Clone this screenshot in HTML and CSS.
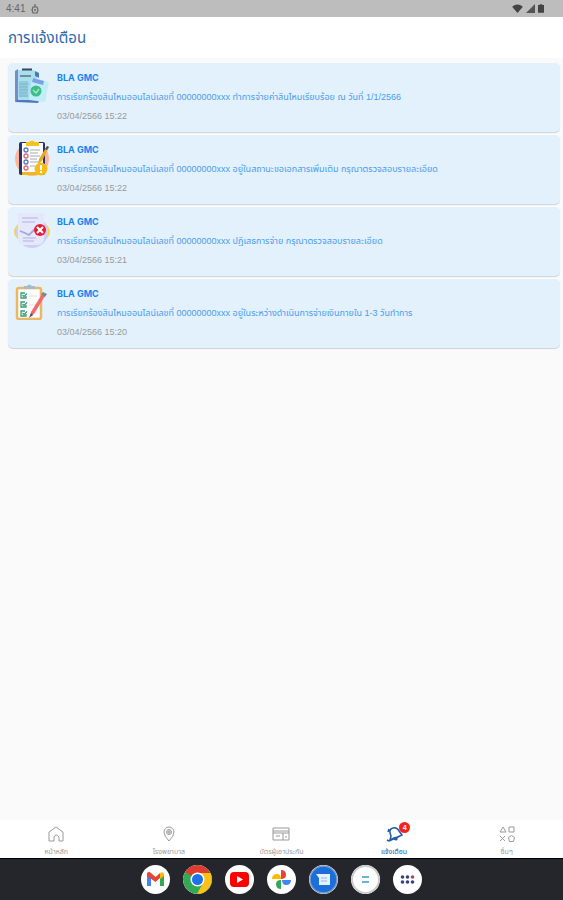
FILE: index.html
```html
<!DOCTYPE html>
<html lang="th">
<head>
    <meta charset="UTF-8">
    <meta name="viewport" content="width=device-width, initial-scale=1.0">
    <title>การแจ้งเตือน</title>
    <link rel="stylesheet" href="styles.css">
</head>
<body>
    <div class="status-bar">
        <span class="time">4:41</span>
        <svg width="8" height="10" viewBox="0 0 8 10"><path d="M4 0v3M2 3h4l1 3-1 3H2L1 6z" fill="none" stroke="#666" stroke-width="1.2"/><circle cx="4" cy="6" r="1" fill="#666"/></svg>
        <div class="status-icons">
            <svg width="11" height="9" viewBox="0 0 12 10"><path d="M0 3Q6-2 12 3L6 10z" fill="#444"/></svg>
            <svg width="9" height="9" viewBox="0 0 9 9"><path d="M9 0v9H0z" fill="#555"/></svg>
            <svg width="6" height="9" viewBox="0 0 7 10"><path d="M2 0h3v1h2v9H0V1h2z" fill="#444"/></svg>
        </div>
    </div>
    <header class="header">
        <h1>การแจ้งเตือน</h1>
    </header>

    <main class="list">
        <article class="card">
            <svg class="card-icon" viewBox="0 0 36 36">
                <path d="M1 3l3-2v31l-3 2z" fill="#6f8fd0"/>
                <path d="M1 34l3-3h22l-2 4z" fill="#5277bd"/>
                <path d="M4 2h16l3 5v25H4z" fill="#a9deea"/>
                <path d="M21 3l4 2v5l-4-2z" fill="#477bbd"/>
                <path d="M8 1.500h10" stroke="#344761" stroke-width="2"/>
                <path d="M6 8h11" stroke="#56758a" stroke-width="1.500"/>
                <path d="M5 13h9v16H5z" fill="#93cbdc"/>
                <path d="M5 16h10M5 19h9M5 22h9M5 25h8M5 28h9" stroke="#7fb7cd"/>
                <path d="M18 10l17 4-4 20-16-2z" fill="#c1edf7"/>
                <path d="M19 10l11 3-1 4-11-3z" fill="#7aa0e6"/>
                <circle cx="22" cy="23" r="5.500" fill="#3cbd8a"/>
                <path d="M19 22l3 3 3-4" fill="none" stroke="#a6ecd0" stroke-width="1.300"/>
            </svg>
            <div class="details">
                <h2>BLA GMC</h2>
                <p>การเรียกร้องสินไหมออนไลน์เลขที่ 00000000xxx ทำการจ่ายค่าสินไหมเรียบร้อย ณ วันที่ 1/1/2566</p>
                <time>03/04/2566 15:22</time>
            </div>
        </article>
        <article class="card">
            <svg class="card-icon" viewBox="0 0 36 36">
                <circle cx="18" cy="19" r="17" fill="#ffb59b"/>
                <rect x="5" y="2" width="26" height="33" rx="2" fill="#24356f"/>
                <path d="M8 32h20v3H8z" fill="#edb819"/>
                <path d="M8 3h21v29H8z" fill="#fff"/>
                <path d="M12 2h3q3-3 6 0h4v4H12z" fill="#f7c323"/>
                <g fill="none" stroke-width="1.300"><circle cx="12" cy="10" r="2" stroke="#5577bd"/><circle cx="12" cy="16" r="2" stroke="#e56475"/><circle cx="12" cy="22" r="2" stroke="#5577bd"/><circle cx="12" cy="28" r="2" stroke="#e56475"/></g>
                <path d="M16 10h10M16 13h8M16 16h10M16 19h7M16 22h9M16 26h5" stroke="#a6a7b5"/>
                <path d="M33 6l2 1-7 14-4 3 1-5z" fill="#e6ac20"/>
                <path d="M33 6l2 1-2 3-2-1z" fill="#4b5270"/>
                <circle cx="27" cy="29" r="6.500" fill="#f6bc16"/>
                <path d="M27 25v5M27 31v2" stroke="#fff" stroke-width="2"/>
            </svg>
            <div class="details">
                <h2>BLA GMC</h2>
                <p>การเรียกร้องสินไหมออนไลน์เลขที่ 00000000xxx อยู่ในสถานะขอเอกสารเพิ่มเติม กรุณาตรวจสอบรายละเอียด</p>
                <time>03/04/2566 15:22</time>
            </div>
        </article>
        <article class="card">
            <svg class="card-icon" viewBox="0 0 36 36">
                <path d="M4 12q-8 8 0 15zM32 12q8 8 0 15z" fill="#f9d347"/>
                <circle cx="18" cy="20" r="16" fill="#cfcff6"/>
                <path d="M4 1h26v27q-2 5-6 5H8q-4-2-4-6z" fill="#e5e7fb"/>
                <path d="M8 6h16M8 10h13M9 26h13M9 29h11" stroke="#c2c5ec" stroke-width="1.300"/>
                <path d="M6 19l5 2 4 2 6-6" fill="none" stroke="#a3a6dc" stroke-width="1.800"/>
                <circle cx="26" cy="18" r="6" fill="#e51c34"/>
                <path d="M23 15l6 6M29 15l-6 6" stroke="#fff" stroke-width="2.200"/>
            </svg>
            <div class="details">
                <h2>BLA GMC</h2>
                <p>การเรียกร้องสินไหมออนไลน์เลขที่ 00000000xxx ปฏิเสธการจ่าย กรุณาตรวจสอบรายละเอียด</p>
                <time>03/04/2566 15:21</time>
            </div>
        </article>
        <article class="card">
            <svg class="card-icon" viewBox="0 0 36 36">
                <rect x="3" y="4" width="24" height="31" rx="2" fill="#fbfbfa" stroke="#e9b765" stroke-width="2.500"/>
                <path d="M10 5V2h3q2-3 5 0h3v3z" fill="#a8b9c9"/>
                <g fill="none" stroke="#3c9c79" stroke-width="1.300"><path d="M12 12v2H7V9h4M12 21v2H7v-5h4M12 30v2H7v-5h4"/><path d="M8.500 11l1.500 1.500 3-3M8.500 20l1.500 1.500 3-3M8.500 29l1.500 1.500 3-3"/></g>
                <path d="M15 12h8M15 21h7" stroke="#e0e3e7"/>
                <path d="M28 10l3 2-11 18-4 3 1-5z" fill="#ef6970"/>
                <path d="M29 8l4 2-2 3-4-3z" fill="#7c8794"/>
                <path d="M17 29l2 2-4 3z" fill="#485468"/>
            </svg>
            <div class="details">
                <h2>BLA GMC</h2>
                <p>การเรียกร้องสินไหมออนไลน์เลขที่ 00000000xxx อยู่ในระหว่างดำเนินการจ่ายเงินภายใน 1-3 วันทำการ</p>
                <time>03/04/2566 15:20</time>
            </div>
        </article>
    </main>

    <nav class="tabs">
        <a href="#">
            <svg viewBox="0 0 18 18"><path d="M2 7l7-5 7 5v9h-4v-4q-3-4-5 0v4H2z"/></svg>
            <span>หน้าหลัก</span>
        </a>
        <a href="#">
            <svg viewBox="0 0 18 18"><path d="M9 16Q4 11 4 7a5 5 0 0110 0q0 4-5 9z"/><circle cx="9" cy="7" r="2.500"/><path d="M9 5v4M7 7h4"/></svg>
            <span>โรงพยาบาล</span>
        </a>
        <a href="#">
            <svg viewBox="0 0 18 18"><path d="M1 3h16v12H1zM1 6h16M1 8h16M11 8v7M4 11h4M13 12h2"/></svg>
            <span>บัตรผู้เอาประกัน</span>
        </a>
        <a href="#" class="active">
            <div class="bell">
                <svg viewBox="0 0 18 18"><path d="M5 15l1-4q-3-7 2-8 4-1 6 3l3 4-4 2-4 1zM4 16l13-6M9 14q3 2 3-1M3 7l1-3M2 15l2 1"/></svg>
                <b class="badge">4</b>
            </div>
            <span>แจ้งเตือน</span>
        </a>
        <a href="#">
            <svg viewBox="0 0 18 18"><path d="M2 7l3-5 3 5zM11 2h5v5h-5zM2 11l5 5M7 11l-5 5"/><path d="M13.500 10.500l3 2-1 4h-4l-1-4z"/></svg>
            <span>อื่นๆ</span>
        </a>
    </nav>

    <div class="dock">
        <button aria-label="Gmail"><svg viewBox="0 0 29 29">
            <path d="M6 9v12h4V12z" fill="#4285f4"/><path d="M19 12v9h4V9z" fill="#34a853"/><path d="M6 8q2-2 4 0l4.500 4L19 8v5l-4.500 4L6 11z" fill="#ea4335"/><path d="M19 8q3-2 4 1v2l-4 3z" fill="#fbbc04"/>
        </svg></button>
        <button aria-label="Chrome"><svg viewBox="0 0 29 29">
            <circle cx="14.500" cy="14.500" r="14.500" fill="#34a853"/><path d="M14.500 14.500L2 7Q6 0 14.500 0T27 7.500z" fill="#df3b30"/><path d="M14.500 8H27.500Q31 16 25 24q-4 5-11 5l6-11z" fill="#fbc116"/><circle cx="14.500" cy="14.500" r="7" fill="#fff"/><circle cx="14.500" cy="14.500" r="5.500" fill="#1a73e8"/>
        </svg></button>
        <button aria-label="YouTube"><svg viewBox="0 0 29 29">
            <rect x="5" y="7" width="19" height="15" rx="4" fill="#f00"/><path d="M12 11v7l6-3.500z" fill="#fff"/>
        </svg></button>
        <button aria-label="Photos"><svg viewBox="0 0 29 29">
            <path d="M14 14H5q0-5 5-5 4 0 4 5z" fill="#fbbc04"/><path d="M14 14V5q5 0 5 5 0 4-5 4z" fill="#ea4335"/><path d="M15 15h9q0 5-5 5-4 0-4-5z" fill="#4285f4"/><path d="M14 15v9q-5 0-5-5 0-4 5-4z" fill="#34a853"/>
        </svg></button>
        <button aria-label="Messages"><svg viewBox="0 0 29 29">
            <circle cx="14.500" cy="14.500" r="13.500" fill="#1a6fdb" stroke="#7c9cc7" stroke-width="1.500"/><path d="M7 9h14v11H10v-7z" fill="#e7f1ff"/><path d="M12 13h6M12 16h6" stroke="#8fb8ee"/>
        </svg></button>
        <button aria-label="Calculator"><svg viewBox="0 0 29 29">
            <circle cx="14.500" cy="14.500" r="13.500" fill="#fff" stroke="#ccc" stroke-width="2"/><path d="M11 12h7M11 17h7" stroke="#3b9ac9" stroke-width="1.500"/>
        </svg></button>
        <button aria-label="All apps"><svg viewBox="0 0 29 29">
            <g fill="#37417d"><circle cx="9.500" cy="12" r="1.800"/><circle cx="14.500" cy="12" r="1.800"/><circle cx="9.500" cy="17" r="1.800"/><circle cx="14.500" cy="17" r="1.800"/><circle cx="19.500" cy="17" r="1.800"/></g><circle cx="19.500" cy="12" r="1.800" fill="#b5405b"/>
        </svg></button>
    </div>
</body>
</html>
```
FILE: styles.css
```css
*{
    margin: 0;
    padding: 0;
    box-sizing: border-box;
}
body{
    display: flex;
    flex-direction: column;
    min-height: 100vh;
    background: #fafafa;
    font-family: "Liberation Sans", "Noto Sans Thai", "Noto Sans", sans-serif;
}
svg{
    display: block;
}
.status-bar{
    display: flex;
    align-items: center;
    gap: 6px;
    height: 17px;
    padding: 0 19px 0 6px;
    background: #bdbdbd;
    color: #666;
    font-size: 10px;
}
.status-icons{
    display: flex;
    align-items: center;
    gap: 3px;
    margin-left: auto;
}
.header{
    display: flex;
    align-items: center;
    height: 41px;
    padding: 0 8px;
    background: #fff;
}
.header h1{
    color: #2d68ad;
    font-size: 15px;
    font-weight: normal;
    line-height: 24px;
}
.list{
    flex: 1;
    display: flex;
    flex-direction: column;
    gap: 3px;
    padding: 5px 3px 5px 8px;
}
.card{
    display: flex;
    gap: 7px;
    height: 69px;
    padding: 5px 6px;
    background: #e3f1fc;
    border-radius: 5px;
    box-shadow: 0 1px 1px #ccd3d8;
}
.card-icon{
    flex: none;
    width: 36px;
    height: 36px;
}
.details{
    padding-top: 2px;
    white-space: nowrap;
}
.details h2{
    color: #1685f2;
    font-family: Inter, "Liberation Sans", sans-serif;
    font-size: 9px;
    line-height: 16px;
}
.details p{
    color: #4b9cee;
    font-size: 9px;
    line-height: 22px;
}
.details time{
    display: block;
    color: #999;
    font-size: 9px;
    line-height: 16px;
}
.tabs{
    display: flex;
    height: 38px;
    background: #fff;
}
.tabs a{
    flex: 1;
    display: flex;
    flex-direction: column;
    align-items: center;
    gap: 4px;
    padding-top: 5px;
    color: #999;
    font-size: 7px;
    line-height: 10px;
    text-decoration: none;
}
.tabs svg{
    width: 18px;
    height: 18px;
    fill: none;
    stroke: currentColor;
    stroke-width: 1;
}
.tabs .active{
    color: #2159a5;
}
.bell{
    position: relative;
}
.bell svg{
    stroke-width: 1.5;
}
.badge{
    position: absolute;
    top: -3px;
    right: -7px;
    width: 11px;
    height: 11px;
    border-radius: 50%;
    background: #f5231b;
    color: #fff;
    font-size: 7px;
    line-height: 11px;
    text-align: center;
}
.dock{
    display: flex;
    justify-content: center;
    align-items: center;
    gap: 13px;
    height: 42px;
    background: #25262b;
    border-top: 1px solid #000;
}
.dock button{
    width: 29px;
    height: 29px;
    border: none;
    border-radius: 50%;
    background: #fff;
    overflow: hidden;
    cursor: pointer;
}
.dock svg{
    width: 29px;
    height: 29px;
}
```
